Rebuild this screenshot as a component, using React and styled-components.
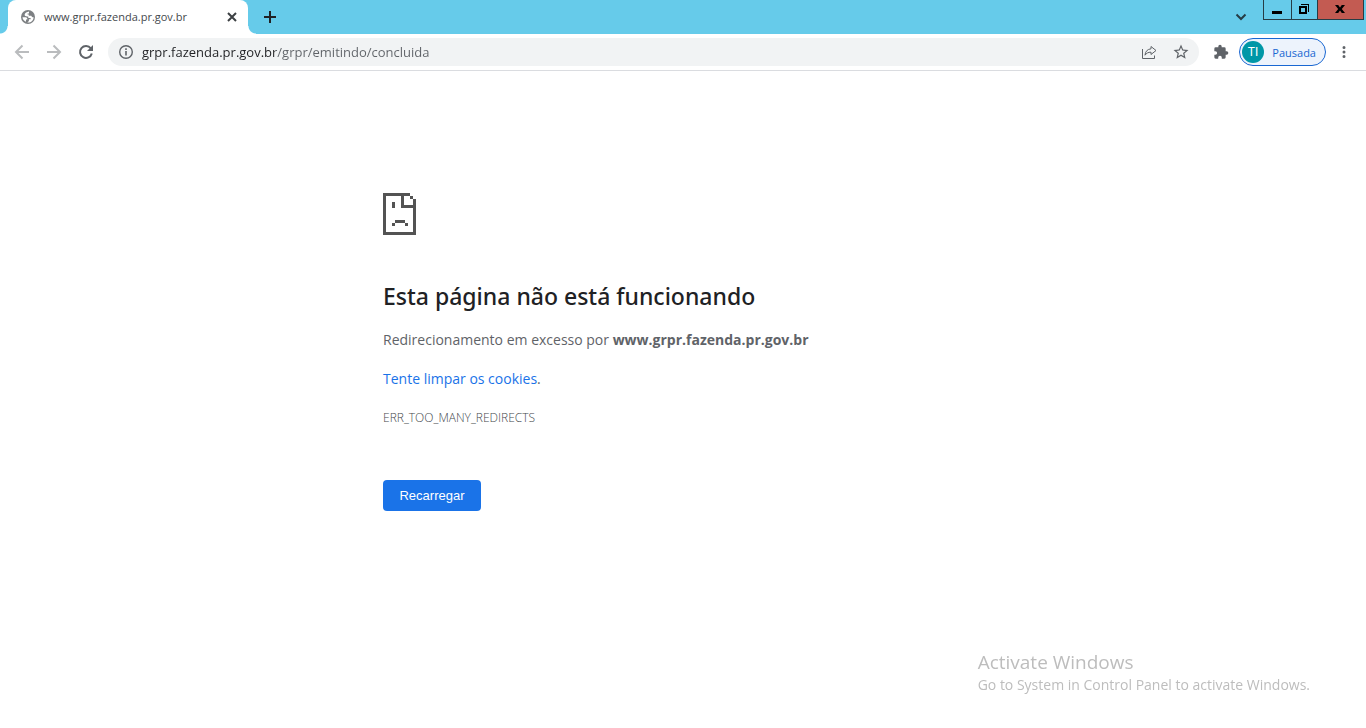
import React from "react";
import styled, { createGlobalStyle } from "styled-components";

const GlobalStyle = createGlobalStyle`
  *, *::before, *::after { box-sizing: border-box; }
  html, body, #root { height: 100%; }
  body {
    margin: 0;
    background: #fff;
    color: #5f6368;
    font-family: "Open Sans", "Noto Sans", sans-serif;
    overflow: hidden;
  }
  button { font-family: inherit; }
`;

const Browser = styled.div`
  display: flex;
  flex-direction: column;
  min-height: 100%;
`;

const TabStrip = styled.header`
  display: flex;
  align-items: flex-start;
  height: 34px;
  padding: 0 2px 0 8px;
  background: #66cbea;
`;

const Tab = styled.div`
  position: relative;
  display: flex;
  align-items: center;
  width: 240px;
  height: 34px;
  padding: 0 8px 0 12px;
  border-radius: 8px 8px 0 0;
  background: #fff;
  color: #45494d;

  &::before, &::after {
    content: "";
    position: absolute;
    bottom: 0;
    width: 8px;
    height: 8px;
  }
  &::before {
    right: 100%;
    background: radial-gradient(circle at 0 0, #66cbea 7px, #fff 8px);
  }
  &::after {
    left: 100%;
    background: radial-gradient(circle at 100% 0, #66cbea 7px, #fff 8px);
  }
`;

const TabTitle = styled.span`
  flex: 1;
  padding-left: 8px;
  font-size: 11px;
  line-height: 16px;
  white-space: nowrap;
`;

const IconButton = styled.button`
  display: flex;
  align-items: center;
  justify-content: center;
  flex: none;
  width: ${(p) => p.$width || 32}px;
  height: ${(p) => p.$height || 28}px;
  padding: 0;
  border: 0;
  background: transparent;
  color: ${(p) => p.$color || "#5f6368"};
`;

const NewTabButton = styled(IconButton)`
  margin-left: 8px;
`;

const Spacer = styled.div`
  flex: 1;
`;

const WindowControls = styled.div`
  display: flex;
  margin-left: 6px;
  border: 1px solid #263d46;
  border-top: 0;
`;

const WindowButton = styled.button`
  display: flex;
  align-items: center;
  justify-content: center;
  width: ${(p) => p.$width}px;
  height: 19px;
  padding: 0 2px 2px 0;
  border: 0;
  background: ${(p) => (p.$close ? "#c35b52" : "transparent")};
  color: #000;

  & + & { border-left: 1px solid #263d46; }
`;

const Toolbar = styled.div`
  display: flex;
  align-items: center;
  height: 37px;
  padding: 0 6px;
  border-bottom: 1px solid #dadce0;
`;

const AddressBar = styled.div`
  display: flex;
  align-items: center;
  flex: 1;
  height: 28px;
  margin-left: 6px;
  margin-right: 6px;
  padding: 0 2px;
  border-radius: 14px;
  background: #f1f3f4;
`;

const AddressInput = styled.input`
  flex: 1;
  min-width: 0;
  height: 24px;
  padding: 0;
  border: 0;
  outline: 0;
  background: linear-gradient(to right, #202124 133px, #5f6368 133px);
  background-clip: text;
  color: transparent;
  font-family: inherit;
  font-size: 13px;
`;

const ProfileButton = styled.button`
  display: flex;
  align-items: center;
  justify-content: space-between;
  flex: none;
  width: 87px;
  height: 28px;
  margin: 0 2px;
  padding: 0 9px 0 2px;
  border: 1px solid #1967d2;
  border-radius: 14px;
  background: #edf3fc;
  color: #1967d2;
  font-size: 11px;
`;

const Avatar = styled.span`
  width: 22px;
  height: 22px;
  border-radius: 50%;
  background: #0097a7;
  color: #fff;
  font-family: Roboto, sans-serif;
  font-size: 12px;
  line-height: 22px;
  text-align: center;
`;

const ErrorPage = styled.main`
  flex: 1;
  width: 100%;
  max-width: 600px;
  margin: 0 auto;
  padding-top: 122px;
  font-size: 14px;
  line-height: 24px;
`;

const Title = styled.h1`
  margin: 43px 0 14px;
  color: #202124;
  font-family: "Noto Sans", "Open Sans", sans-serif;
  font-size: 23px;
  font-weight: 500;
  line-height: 36px;
`;

const Paragraph = styled.p`
  margin: 0 0 15px;
`;

const CookieLink = styled.a`
  color: #1a73e8;
  text-decoration: none;
`;

const ErrorCode = styled.div`
  color: #45494d;
  font-size: 12px;
  font-weight: 300;
`;

const ReloadButton = styled.button`
  min-width: 98px;
  height: 31px;
  margin-top: 50px;
  padding: 0 16px;
  border: 0;
  border-radius: 4px;
  background: #1a73e8;
  color: #fff;
  && { font-family: "Liberation Sans", Arial, sans-serif; }
  font-size: 13px;
`;

const Watermark = styled.aside`
  position: fixed;
  right: 56px;
  bottom: 33px;
  color: #bdbdbd;
  font-size: 14px;
  line-height: 20px;
`;

const WatermarkTitle = styled.div`
  font-size: 19px;
  line-height: 26px;
`;

const Line = ({ size, d, width = 2, box = size }) => (
  <svg width={size} height={size} viewBox={`0 0 ${box} ${box}`} fill="none" stroke="currentColor" strokeWidth={width} aria-hidden="true">
    <path d={d} />
  </svg>
);

const Solid = ({ size, d }) => (
  <svg width={size} height={size} viewBox="0 0 24 24" fill="currentColor" aria-hidden="true">
    <path d={d} />
  </svg>
);

const Globe = () => (
  <svg width="16" height="16" viewBox="0 0 16 16" aria-hidden="true">
    <circle cx="8" cy="8" r="7" fill="#7d8083" />
    <path d="M9 2.600C6.900 3 4.800 4 4.600 5.800C4.600 7.300 6.200 7.600 8.300 7.400V8.900H10.600V10.300H8.900V12L7.300 13.500C10.900 13.900 13.600 11.300 13.600 8.200C12.700 8.300 11.800 7.800 11.300 6.700H8.800V5.500H7.600V4.500H9Z M2.500 8.300H5.600C6.900 8.400 7.600 9.200 7.300 10.500H6V12.800C4.100 12.200 2.600 10.500 2.500 8.300Z" fill="#fff" />
  </svg>
);

const SadPage = () => (
  <svg width="33" height="42" viewBox="0 0 33 42" fill="#535353" shapeRendering="crispEdges" display="block" aria-hidden="true">
    <path d="M0 0H27V3H21V12H33V42H0ZM3 3V39H30V15H18V3ZM27 3H30V6H27ZM30 6H33V12H30ZM9 9H12V15H9ZM12 27H22V30H12ZM9 30H12V33H9ZM22 30H25V33H22Z" fillRule="evenodd" />
  </svg>
);

export default function App() {
  return (
    <>
      <GlobalStyle />
      <Browser>
        <TabStrip>
          <Tab>
            <Globe />
            <TabTitle>www.grpr.fazenda.pr.gov.br</TabTitle>
            <IconButton $width={16} $height={16} $color="#3c4043" aria-label="Fechar guia">
              <Line size={16} d="M4 4 12 12M12 4 4 12" />
            </IconButton>
          </Tab>
          <NewTabButton $width={28} $height={34} $color="#202124" aria-label="Nova guia">
            <Line size={28} d="M14 8V20M8 14H20" />
          </NewTabButton>
          <Spacer />
          <IconButton $width={32} $height={34} $color="#263d46" aria-label="Pesquisar guias">
            <Line size={16} d="M3.500 5.500 8 10 12.500 5.500" />
          </IconButton>
          <WindowControls>
            <WindowButton $width={27} aria-label="Minimizar">
              <Line size={16} d="M3 11.5H13" width={3} />
            </WindowButton>
            <WindowButton $width={26} aria-label="Restaurar">
              <svg width="12" height="12" viewBox="0 0 12 12" fill="none" stroke="currentColor" shapeRendering="crispEdges" aria-hidden="true">
                <rect x="2" y="4" width="6" height="6" strokeWidth="2" />
                <path d="M3 1.5H10.5V9" />
              </svg>
            </WindowButton>
            <WindowButton $width={46} $close aria-label="Fechar">
              <svg width="10" height="8" viewBox="0 0 10 8" fill="currentColor" aria-hidden="true">
                <path d="M0 0H3.2L5 2.4 6.8 0H10L6.8 4 10 8H6.8L5 5.6 3.2 8H0L3.2 4Z" />
              </svg>
            </WindowButton>
          </WindowControls>
        </TabStrip>

        <Toolbar>
          <IconButton $color="#babcbe" aria-label="Voltar">
            <Line size={16} d="M15 8H2M8.5 1.5 2 8 8.5 14.5" />
          </IconButton>
          <IconButton $color="#babcbe" aria-label="Avançar">
            <Line size={16} d="M1 8H14M7.5 1.5 14 8 7.5 14.5" />
          </IconButton>
          <IconButton aria-label="Recarregar esta página">
            <svg width="16" height="16" viewBox="0 0 16 16" fill="none" stroke="currentColor" strokeWidth="2" aria-hidden="true">
              <path d="M12.800 4.300A6 6 0 1 0 13.800 9.500" />
              <path d="M15 1V7H9Z" fill="currentColor" stroke="none" />
            </svg>
          </IconButton>
          <AddressBar>
            <IconButton aria-label="Informações do site">
              <svg width="16" height="16" viewBox="0 0 16 16" fill="none" stroke="currentColor" aria-hidden="true">
                <circle cx="8" cy="8" r="6.300" strokeWidth="1.400" />
                <path d="M8 7V11.500M8 4.300V5.900" strokeWidth="1.600" />
              </svg>
            </IconButton>
            <AddressInput aria-label="Endereço" defaultValue="grpr.fazenda.pr.gov.br/grpr/emitindo/concluida" spellCheck={false} />
            <IconButton aria-label="Compartilhar">
              <Line size={16} width={1} d="M1.5 5V14.5H13.5V11.500M10 2.500 15 6.500 10 10.500V8.200C7.200 8.200 5.500 9 4 11.200C4.300 7.500 6.300 5.200 10 4.800Z" />
            </IconButton>
            <IconButton aria-label="Adicionar aos favoritos">
              <Solid size={18} d="m22 9.24-7.19-.62L12 2 9.19 8.63 2 9.24l5.46 4.73L5.82 21 12 17.27 18.18 21l-1.63-7.03zM12 15.4l-3.76 2.27 1-4.28-3.32-2.88 4.38-.38L12 6.1l1.71 4.04 4.38.38-3.32 2.88 1 4.28z" />
            </IconButton>
          </AddressBar>
          <IconButton aria-label="Extensões">
            <Solid size={16} d="M20.5 11H19V7a2 2 0 0 0-2-2h-4V3.500a2.500 2.500 0 0 0-5 0V5H4a2 2 0 0 0-2 2v3.800h1.500a2.700 2.700 0 0 1 0 5.400H2V20a2 2 0 0 0 2 2h3.800v-1.500a2.700 2.700 0 0 1 5.400 0V22H17a2 2 0 0 0 2-2v-4h1.500a2.500 2.500 0 0 0 0-5" />
          </IconButton>
          <ProfileButton>
            <Avatar>TI</Avatar>
            Pausada
          </ProfileButton>
          <IconButton aria-label="Menu">
            <Solid size={18} d="M12 8a2 2 0 1 0 0-4 2 2 0 0 0 0 4m0 2a2 2 0 1 0 0 4 2 2 0 0 0 0-4m0 6a2 2 0 1 0 0 4 2 2 0 0 0 0-4" />
          </IconButton>
        </Toolbar>

        <ErrorPage>
          <SadPage />
          <Title>Esta página não está funcionando</Title>
          <Paragraph>
            Redirecionamento em excesso por <strong>www.grpr.fazenda.pr.gov.br</strong>
          </Paragraph>
          <Paragraph>
            <CookieLink href="#cookies">Tente limpar os cookies</CookieLink>.
          </Paragraph>
          <ErrorCode>ERR_TOO_MANY_REDIRECTS</ErrorCode>
          <ReloadButton>Recarregar</ReloadButton>
        </ErrorPage>

        <Watermark>
          <WatermarkTitle>Activate Windows</WatermarkTitle>
          Go to System in Control Panel to activate Windows.
        </Watermark>
      </Browser>
    </>
  );
}
